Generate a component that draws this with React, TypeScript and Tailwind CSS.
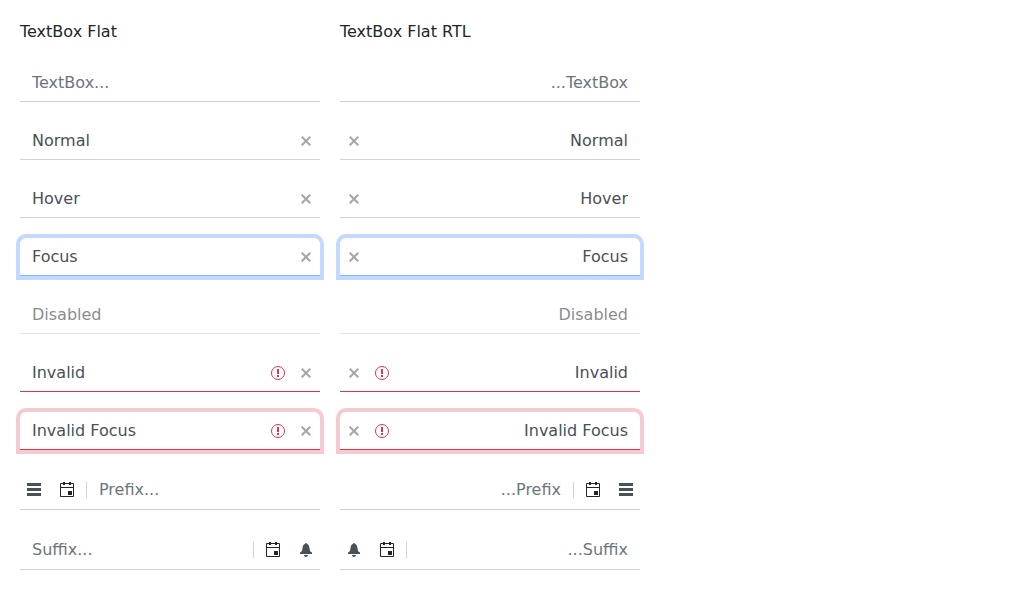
import type { ReactNode } from "react";

type Dir = "ltr" | "rtl";
type State = "normal" | "hover" | "focus" | "disabled" | "invalid" | "invalidFocus";

const stateClasses: Record<State, string> = {
  normal: "border-b-[#ced4da]",
  hover: "border-b-[#ced4da]",
  focus: "border-b-[#86b7fe] rounded-t-md ring-4 ring-[#c2daff]",
  disabled: "border-b-[#ced4da] opacity-65",
  invalid: "border-b-[#dc3545]",
  invalidFocus: "border-b-[#dc3545] rounded-t-md ring-4 ring-[#f6cbd0]",
};

function Icon({ children }: { children: ReactNode }) {
  return (
    <svg className="size-4" viewBox="0 0 16 16" fill="currentColor" aria-hidden="true">
      {children}
    </svg>
  );
}

const ClearIcon = () => (
  <Icon>
    <path d="M13 4.500 11.500 3 8 6.500 4.500 3 3 4.500 6.500 8 3 11.500 4.500 13 8 9.500l3.500 3.500 1.500-1.500L9.500 8z" />
  </Icon>
);

const WarningIcon = () => (
  <Icon>
    <circle cx="8" cy="8" r="6.5" fill="none" stroke="currentColor" />
    <path d="M7 4h2v5H7zM7 10h2v2H7z" />
  </Icon>
);

const MenuIcon = () => (
  <Icon>
    <path d="M1 1h14v3H1zM1 6h14v3H1zM1 11h14v3H1z" />
  </Icon>
);

const CalendarIcon = () => (
  <Icon>
    <path d="M14 1h-2V0h-2v1H6V0H4v1H2a1 1 0 0 0-1 1v12a1 1 0 0 0 1 1h12a1 1 0 0 0 1-1V2a1 1 0 0 0-1-1zm0 13H2V6h12zm0-9H2V2h2v1h2V2h4v1h2V2h2z" />
    <path d="M9 9h4v4H9z" />
  </Icon>
);

const BellIcon = () => (
  <Icon>
    <path d="M14 10.500V12H2v-1.500c1.300-.4 2-1.300 2.200-2.500L4.700 5C5 3.200 5.800 2.200 7 2a1 1 0 0 1 2 0c1.200.2 2 1.200 2.300 3l.5 3c.2 1.200.9 2.100 2.200 2.500zM6 13h4c0 1.200-.9 2-2 2s-2-.8-2-2z" />
  </Icon>
);

function Slot({ children }: { children: ReactNode }) {
  return <span className="flex w-7 shrink-0 items-center justify-center">{children}</span>;
}

function CalendarButton() {
  return (
    <button type="button" aria-label="Open calendar" className="flex w-[38px] shrink-0 items-center justify-center text-[#212529]">
      <CalendarIcon />
    </button>
  );
}

function Separator() {
  return <span className="h-4 w-px shrink-0 self-center bg-[#ced4da]" />;
}

interface FieldProps {
  label: string;
  value?: string;
  placeholder?: string;
  state?: State;
  clearable?: boolean;
  prefix?: ReactNode;
  suffix?: ReactNode;
}

function Field({ label, value, placeholder, state = "normal", clearable, prefix, suffix }: FieldProps) {
  const invalid = state === "invalid" || state === "invalidFocus";
  const tall = prefix || suffix;
  return (
    <div
      className={`flex border-b pt-px text-[#495057] ${tall ? "h-10" : ""} ${stateClasses[state]}`}
    >
      {prefix}
      <input
        type="text"
        aria-label={label}
        aria-invalid={invalid}
        disabled={state === "disabled"}
        defaultValue={value}
        placeholder={placeholder}
        className="min-w-0 flex-1 bg-transparent px-3 py-1.5 text-base leading-6 outline-none placeholder:text-[#6c757d]"
      />
      {invalid && (
        <Slot>
          <span className="text-[#dc3545]">
            <WarningIcon />
          </span>
        </Slot>
      )}
      {clearable && (
        <button type="button" aria-label="Clear" className="flex w-7 shrink-0 items-center justify-center text-[#a4a8ab]">
          <ClearIcon />
        </button>
      )}
      {suffix}
    </div>
  );
}

function Column({ title, dir }: { title: string; dir: Dir }) {
  return (
    <section className="flex flex-col gap-5">
      <h2 className="text-base leading-6 text-[#212529]">{title}</h2>
      <div dir={dir} className="flex flex-col gap-5">
        <Field label="TextBox" placeholder="TextBox..." />
        <Field label="Normal" value="Normal" clearable />
        <Field label="Hover" value="Hover" state="hover" clearable />
        <Field label="Focus" value="Focus" state="focus" clearable />
        <Field label="Disabled" value="Disabled" state="disabled" />
        <Field label="Invalid" value="Invalid" state="invalid" clearable />
        <Field label="Invalid Focus" value="Invalid Focus" state="invalidFocus" clearable />
        <Field
          label="Prefix"
          placeholder="Prefix..."
          prefix={
            <>
              <Slot>
                <MenuIcon />
              </Slot>
              <CalendarButton />
              <Separator />
            </>
          }
        />
        <Field
          label="Suffix"
          placeholder="Suffix..."
          suffix={
            <>
              <Separator />
              <CalendarButton />
              <Slot>
                <BellIcon />
              </Slot>
            </>
          }
        />
      </div>
    </section>
  );
}

export default function App() {
  return (
    <main className="grid max-w-[660px] grid-cols-2 gap-5 bg-white p-5 font-['DejaVu_Sans',sans-serif]">
      <Column title="TextBox Flat" dir="ltr" />
      <Column title="TextBox Flat RTL" dir="rtl" />
    </main>
  );
}
